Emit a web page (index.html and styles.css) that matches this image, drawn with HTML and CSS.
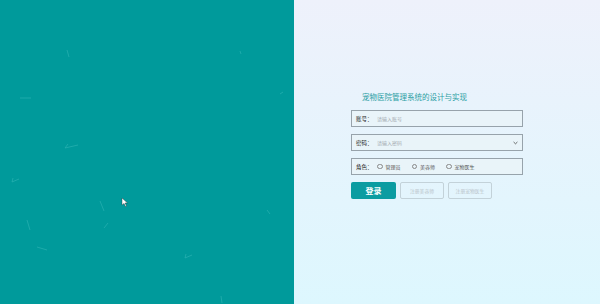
FILE: index.html
```html
<!DOCTYPE html>
<html lang="zh">
    <head>
        <meta charset="utf-8">
        <meta name="viewport" content="width=device-width, initial-scale=1">
        <title>宠物医院管理系统的设计与实现</title>
        <link rel="stylesheet" href="styles.css">
    </head>
    <body>
        <div class="page">
            <!-- 左侧的装饰区域 -->
            <div class="side">
                <svg class="particles" width="294" height="304" viewBox="0 0 294 304">
                    <g stroke="#5fd0cf" stroke-width="0.7" opacity="0.45">
                        <line x1="67" y1="50" x2="69" y2="57"/>
                        <line x1="240" y1="51" x2="241" y2="54"/>
                        <line x1="20" y1="98" x2="31" y2="98"/>
                        <line x1="65" y1="148" x2="78" y2="145"/>
                        <line x1="65" y1="148" x2="68" y2="144"/>
                        <line x1="12" y1="182" x2="19" y2="179"/>
                        <line x1="12" y1="182" x2="13" y2="178"/>
                        <line x1="100" y1="201" x2="104" y2="211"/>
                        <line x1="104" y1="228" x2="108" y2="223"/>
                        <line x1="27" y1="220" x2="30" y2="230"/>
                        <line x1="37" y1="247" x2="47" y2="250"/>
                        <line x1="185" y1="258" x2="192" y2="255"/>
                        <line x1="185" y1="258" x2="186" y2="254"/>
                        <line x1="267" y1="210" x2="270" y2="214"/>
                        <line x1="221" y1="296" x2="222" y2="303"/>
                        <line x1="280" y1="94" x2="283" y2="92"/>
                    </g>
                    <polygon points="122,198 122,205 124,203.5 125.5,206.5 126.5,206 125,203 127.5,203" fill="#ffffff" stroke="#333" stroke-width="0.4"/>
                </svg>
            </div>
            <div class="main">
                <form class="login">
                    <div class="title">宠物医院管理系统的设计与实现</div>
                    <div class="field">
                        <label>账号：</label>
                        <input type="text" placeholder="请输入账号">
                    </div>
                    <div class="field">
                        <label>密码：</label>
                        <input type="password" placeholder="请输入密码">
                        <svg class="chevron" width="5" height="4" viewBox="0 0 5 4">
                            <path d="M0.6 1 L2.5 2.8 L4.4 1" fill="none" stroke="#444" stroke-width="0.8"/>
                        </svg>
                    </div>
                    <div class="field">
                        <label>角色：</label>
                        <span class="radio"><i></i>管理员</span>
                        <span class="radio"><i></i>美容师</span>
                        <span class="radio"><i></i>宠物医生</span>
                    </div>
                    <div class="buttons">
                        <button type="button" class="btn-login">登录</button>
                        <button type="button" class="btn-reg">注册美容师</button>
                        <button type="button" class="btn-reg">注册宠物医生</button>
                    </div>
                </form>
            </div>
        </div>
    </body>
</html>
```

FILE: styles.css
```css
body {
    margin: 0;
    font-family: "Noto Sans CJK SC", "Noto Sans", sans-serif;
}
.page {
    display: flex;
    height: 304px;
    overflow: hidden;
}
.side {
    position: relative;
    width: 294px;
    background: #009a9b;
}
.particles {
    position: absolute;
    top: 0;
    left: 0;
}
.main {
    flex: 1;
    background: linear-gradient(#eef1fb, #ddf7fe);
    padding: 91px 0 0 57px;
}
.login {
    width: 172px;
}
.title {
    margin-left: 11px;
    height: 19px;
    font-size: 7.5px;
    color: #2b9ea3;
}
.field {
    display: flex;
    align-items: center;
    box-sizing: border-box;
    height: 17px;
    margin-bottom: 7px;
    padding: 0 4px;
    border: 1px solid #97a3ab;
    background: #e9f4f9;
}
.field label {
    width: 21px;
    font-size: 5.5px;
    color: #222;
}
.field input {
    flex: 1;
    border: none;
    background: transparent;
    padding: 0;
    font-size: 5px;
    font-family: inherit;
    outline: none;
}
.field input::placeholder {
    color: #a5acb2;
}
.radio {
    display: flex;
    align-items: center;
    margin-right: 11px;
    font-size: 5px;
    color: #555;
}
.radio i {
    width: 3.5px;
    height: 3.5px;
    margin-right: 3px;
    border: 0.7px solid #888;
    border-radius: 50%;
}
.buttons {
    display: flex;
    gap: 4px;
    margin-top: 4px;
}
.buttons button {
    height: 17px;
    padding: 0;
    font-family: inherit;
    border-radius: 2px;
    cursor: pointer;
}
.btn-login {
    width: 45px;
    border: none;
    background: #0b9ca1;
    color: #fff;
    font-size: 8px;
    font-weight: bold;
}
.btn-reg {
    width: 44px;
    border: 1px solid #c3d2d9;
    border-radius: 4px;
    background: transparent;
    color: #b8c2c8;
    font-size: 4.8px;
}
```
